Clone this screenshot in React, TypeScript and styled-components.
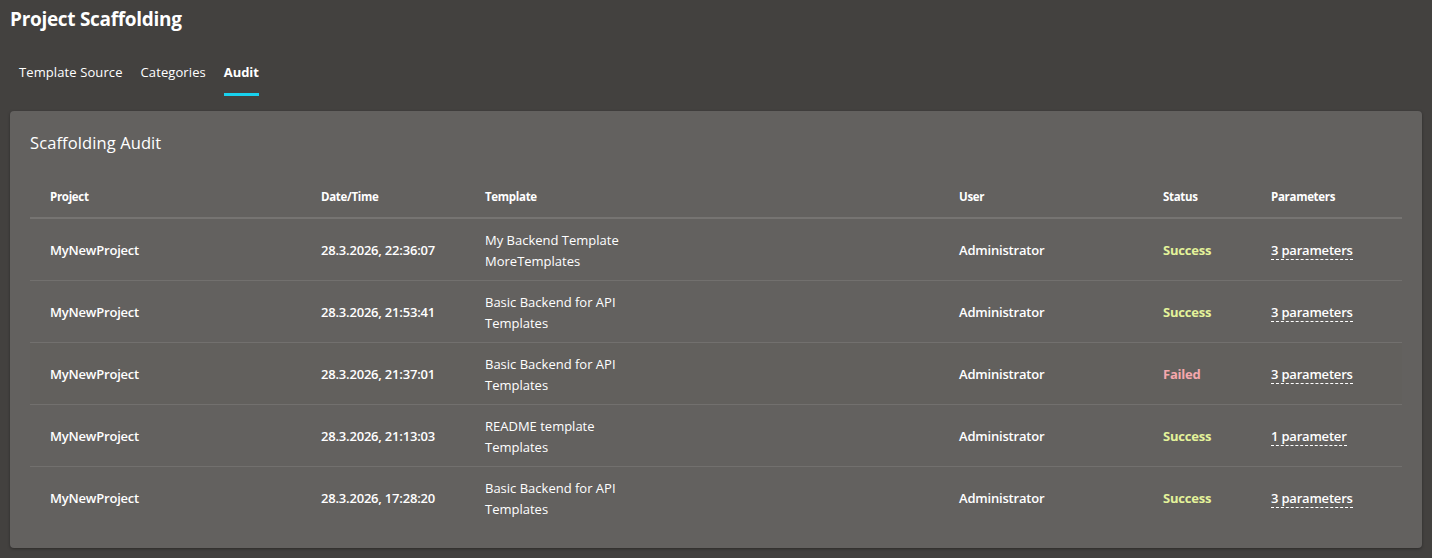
import React from "react";
import styled, { createGlobalStyle } from "styled-components";

const Global = createGlobalStyle`
  html, body { margin: 0; padding: 0; background: #43413f; }
  body { font-family: "Open Sans", "Noto Sans", sans-serif; color: #ffffff; }
  * { box-sizing: border-box; }
`;

const Page = styled.div`
  padding: 5px 10px 10px 10px;
  min-height: 558px;
`;

const Title = styled.h1`
  margin: 0;
  font-size: 19px;
  line-height: 28px;
  font-weight: 700;
  color: #fff;
  letter-spacing: -0.3px;
`;

const Tabs = styled.nav`
  display: flex;
  margin-top: 18px;
`;

const Tab = styled.div<{ $active?: boolean }>`
  margin: 0 ${(p) => (p.$active ? 9 : 9)}px;
  padding: 12px 0 12px;
  font-size: 13px;
  line-height: 18px;
  font-weight: ${(p) => (p.$active ? 700 : 500)};
  letter-spacing: ${(p) => (p.$active ? "-0.1px" : "0.1px")};
  color: #fff;
  border-bottom: 3px solid ${(p) => (p.$active ? "#18d1ee" : "transparent")};
`;

const Card = styled.section`
  margin-top: 15px;
  background: #63615f;
  border-radius: 4px;
  box-shadow: 0 1px 3px rgba(0, 0, 0, 0.35);
  padding: 20px 20px 20px 20px;
`;

const CardTitle = styled.h2`
  margin: 0;
  font-size: 16.5px;
  line-height: 24px;
  font-weight: 400;
  color: #fff;
  letter-spacing: 0.1px;
`;

const Table = styled.table`
  margin-top: 19px;
  width: 100%;
  border-collapse: collapse;
  table-layout: fixed;
`;

const Th = styled.th<{ $w: number }>`
  width: ${(p) => p.$w}px;
  text-align: left;
  padding: 14px 20px 11px;
  font-size: 11.5px;
  line-height: 18px;
  font-weight: 700;
  letter-spacing: -0.3px;
  color: #fff;
  border-bottom: 2px solid #767472;
`;

const Tr = styled.tr<{ $hover?: boolean }>`
  background: ${(p) => (p.$hover ? "#62605d" : "transparent")};
  border-bottom: 1px solid #72706e;
  &:last-child { border-bottom: none; }
`;

const Td = styled.td<{ $weight?: number; $ls?: string }>`
  padding: 11px 20px 9px;
  height: 61px;
  font-size: 13px;
  line-height: 20.5px;
  font-weight: ${(p) => p.$weight ?? 600};
  letter-spacing: ${(p) => p.$ls ?? "-0.2px"};
  color: #fff;
  vertical-align: middle;
`;

const Line = styled.div``;

const Status = styled.span<{ $ok: boolean }>`
  font-weight: 700;
  color: ${(p) => (p.$ok ? "#e4f39a" : "#f5a8ad")};
`;

const Params = styled.span`
  font-weight: 600;
  color: #fff;
  border-bottom: 1px dashed #fff;
  cursor: help;
`;

type Row = {
  date: string;
  template: string;
  source: string;
  ok: boolean;
  params: number;
};

const rows: Row[] = [
  { date: "28.3.2026, 22:36:07", template: "My Backend Template", source: "MoreTemplates", ok: true, params: 3 },
  { date: "28.3.2026, 21:53:41", template: "Basic Backend for API", source: "Templates", ok: true, params: 3 },
  { date: "28.3.2026, 21:37:01", template: "Basic Backend for API", source: "Templates", ok: false, params: 3 },
  { date: "28.3.2026, 21:13:03", template: "README template", source: "Templates", ok: true, params: 1 },
  { date: "28.3.2026, 17:28:20", template: "Basic Backend for API", source: "Templates", ok: true, params: 3 },
];

export default function App() {
  return (
    <>
      <Global />
      <Page>
        <Title>Project Scaffolding</Title>
        <Tabs>
          <Tab>Template Source</Tab>
          <Tab>Categories</Tab>
          <Tab $active>Audit</Tab>
        </Tabs>
        <Card>
          <CardTitle>Scaffolding Audit</CardTitle>
          <Table>
            <thead>
              <tr>
                <Th $w={271}>Project</Th>
                <Th $w={164}>Date/Time</Th>
                <Th $w={474}>Template</Th>
                <Th $w={204}>User</Th>
                <Th $w={108}>Status</Th>
                <Th $w={151}>Parameters</Th>
              </tr>
            </thead>
            <tbody>
              {rows.map((r, i) => (
                <Tr key={i} $hover={i === 2}>
                  <Td>MyNewProject</Td>
                  <Td>{r.date}</Td>
                  <Td $weight={500} $ls="0px">
                    <Line>{r.template}</Line>
                    <Line>{r.source}</Line>
                  </Td>
                  <Td>Administrator</Td>
                  <Td>
                    <Status $ok={r.ok}>{r.ok ? "Success" : "Failed"}</Status>
                  </Td>
                  <Td>
                    <Params>
                      {r.params} {r.params === 1 ? "parameter" : "parameters"}
                    </Params>
                  </Td>
                </Tr>
              ))}
            </tbody>
          </Table>
        </Card>
      </Page>
    </>
  );
}
